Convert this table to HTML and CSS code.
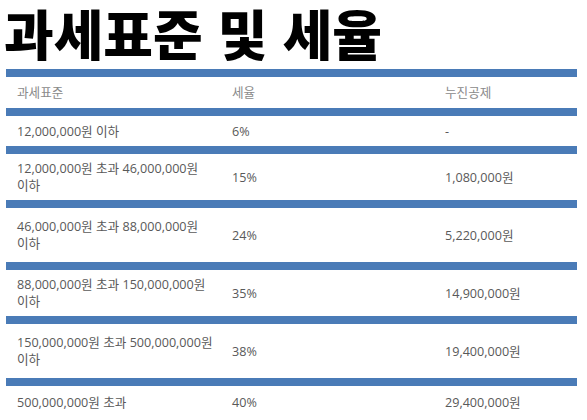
FILE: index.html
```html
<!DOCTYPE html>
<html lang="ko">
<head>
<meta charset="utf-8">
<link rel="stylesheet" href="styles.css">
</head>
<body>
<div class="page">
  <h1 class="title">과세표준 및 세율</h1>
  <div class="table">
    <div class="row head">
      <div class="cell">과세표준</div>
      <div class="cell">세율</div>
      <div class="cell">누진공제</div>
    </div>
    <div class="row one">
      <div class="cell">12,000,000원 이하</div>
      <div class="cell">6%</div>
      <div class="cell">-</div>
    </div>
    <div class="row two">
      <div class="cell">12,000,000원 초과 46,000,000원<br>이하</div>
      <div class="cell">15%</div>
      <div class="cell">1,080,000원</div>
    </div>
    <div class="row two wide">
      <div class="cell">46,000,000원 초과 88,000,000원<br>이하</div>
      <div class="cell">24%</div>
      <div class="cell">5,220,000원</div>
    </div>
    <div class="row two">
      <div class="cell">88,000,000원 초과 150,000,000원<br>이하</div>
      <div class="cell">35%</div>
      <div class="cell">14,900,000원</div>
    </div>
    <div class="row two wide">
      <div class="cell">150,000,000원 초과 500,000,000원<br>이하</div>
      <div class="cell">38%</div>
      <div class="cell">19,400,000원</div>
    </div>
    <div class="row one last">
      <div class="cell">500,000,000원 초과</div>
      <div class="cell">40%</div>
      <div class="cell">29,400,000원</div>
    </div>
  </div>
</div>
</body>
</html>
```

FILE: styles.css
```css
html, body {
  margin: 0;
  padding: 0;
  background: #ffffff;
}

.page {
  width: 587px;
  height: 420px;
  overflow: hidden;
  display: flex;
  flex-direction: column;
}

.title {
  margin: 0;
  padding: 0 0 0 4px;
  font-family: "Noto Sans CJK KR", sans-serif;
  font-weight: 900;
  font-size: 54px;
  line-height: 69px;
  color: #000000;
  white-space: nowrap;
  position: relative;
  top: -2px;
  margin-bottom: -2px;
}

.table {
  margin-top: 2px;
  margin-left: 6px;
  width: 571px;
  display: flex;
  flex-direction: column;
  font-family: "Open Sans", "Noto Sans CJK KR", sans-serif;
  font-size: 12.6px;
  line-height: 17px;
  color: #595959;
}

.row {
  display: grid;
  grid-template-columns: 215px 213px 1fr;
  align-items: center;
  border-top: 8px solid #4a7bb7;
}

.cell {
  padding-left: 11px;
}

.head {
  padding: 7px 0;
  color: #8a8a8a;
}

.one {
  padding: 7px 0 6px;
}

.two {
  padding: 6px 0;
}

.two.wide {
  padding: 10px 0;
}

.last {
  padding-top: 8px;
}
```
